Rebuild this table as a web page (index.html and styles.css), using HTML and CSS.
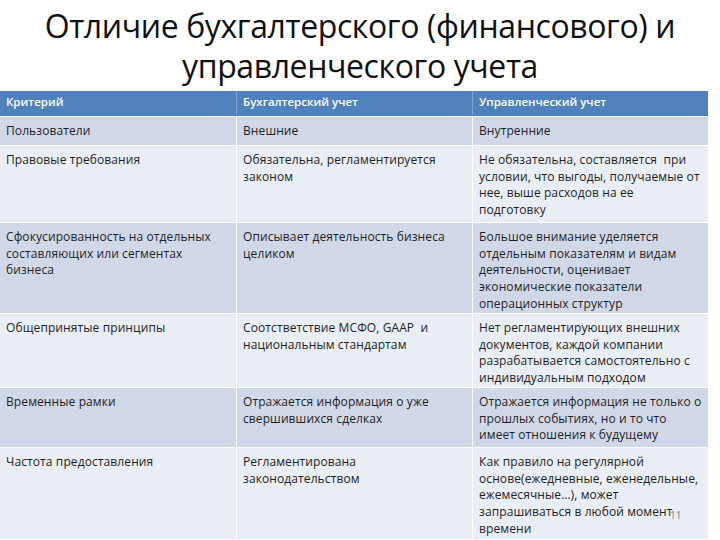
FILE: index.html
```html
<!DOCTYPE html>
<html lang="ru">
<head>
<meta charset="utf-8">
<link rel="stylesheet" href="styles.css">
</head>
<body>
<div class="slide">
  <h1 class="title">Отличие бухгалтерского (финансового) и<br>управленческого учета</h1>
  <div class="table">
    <div class="row head">
      <div class="cell">Критерий</div>
      <div class="cell">Бухгалтерский учет</div>
      <div class="cell">Управленческий учет</div>
    </div>
    <div class="row dark r1">
      <div class="cell">Пользователи</div>
      <div class="cell">Внешние</div>
      <div class="cell">Внутренние</div>
    </div>
    <div class="row light r2">
      <div class="cell">Правовые требования</div>
      <div class="cell">Обязательна, регламентируется законом</div>
      <div class="cell">Не обязательна, составляется&nbsp; при условии, что выгоды, получаемые от нее, выше расходов на ее подготовку</div>
    </div>
    <div class="row dark r3">
      <div class="cell">Сфокусированность на отдельных составляющих или сегментах бизнеса</div>
      <div class="cell">Описывает деятельность бизнеса целиком</div>
      <div class="cell">Большое внимание уделяется отдельным показателям и видам деятельности, оценивает экономические показатели операционных структур</div>
    </div>
    <div class="row light r4">
      <div class="cell">Общепринятые принципы</div>
      <div class="cell">Соотстветствие МСФО, GAAP&nbsp; и национальным стандартам</div>
      <div class="cell">Нет регламентирующих внешних документов, каждой компании разрабатывается самостоятельно с индивидуальным подходом</div>
    </div>
    <div class="row dark r5">
      <div class="cell">Временные рамки</div>
      <div class="cell">Отражается информация о уже свершившихся сделках</div>
      <div class="cell">Отражается информация не только о прошлых событиях, но и то что имеет отношения к будущему</div>
    </div>
    <div class="row light r6">
      <div class="cell">Частота предоставления</div>
      <div class="cell">Регламентирована законодательством</div>
      <div class="cell">Как правило на регулярной основе(ежедневные, еженедельные, ежемесячные…), может запрашиваться в любой момент времени</div>
    </div>
  </div>
  <span class="pagenum">11</span>
</div>
</body>
</html>
```

FILE: styles.css
```css
html, body {
  margin: 0;
  padding: 0;
  background: #ffffff;
}
.slide {
  width: 720px;
  height: 540px;
  overflow: hidden;
  position: relative;
  font-family: "Open Sans", "Liberation Sans", sans-serif;
  color: #000;
}
.title {
  margin: 0;
  height: 91px;
  box-sizing: border-box;
  padding-top: 6px;
  font-weight: normal;
  font-size: 32px;
  line-height: 40px;
  text-align: center;
  letter-spacing: -0.4px;
  color: #111;
}
.table {
  width: 708px;
  display: flex;
  flex-direction: column;
}
.row {
  display: grid;
  grid-template-columns: 236px 236px 236px;
  border-bottom: 1px solid #fff;
  box-sizing: border-box;
}
.cell {
  padding: 6px 6px 0 6px;
  font-size: 12px;
  letter-spacing: 0.1px;
  line-height: 16.7px;
  border-left: 1px solid #fff;
  box-sizing: border-box;
  color: #1e1e1e;
}
.cell:first-child {
  border-left: none;
}
.head {
  height: 26px;
  background: #4f81bd;
}
.head .cell {
  color: #fff;
  font-weight: 600;
  font-size: 11.5px;
  letter-spacing: 0;
  padding-top: 3px;
  border-left-color: #7fa3d0;
}
.dark { background: #d0d8e8; }
.light { background: #e9edf4; }
.r1 { height: 29px; }
.r2 { height: 77px; }
.r3 { height: 91px; }
.r4 { height: 74px; }
.r5 { height: 60px; }
.r6 { height: 92px; }
.pagenum {
  position: absolute;
  left: 670px;
  top: 510px;
  font-size: 10px;
  line-height: 10px;
  color: #7f7f7f;
}
```
